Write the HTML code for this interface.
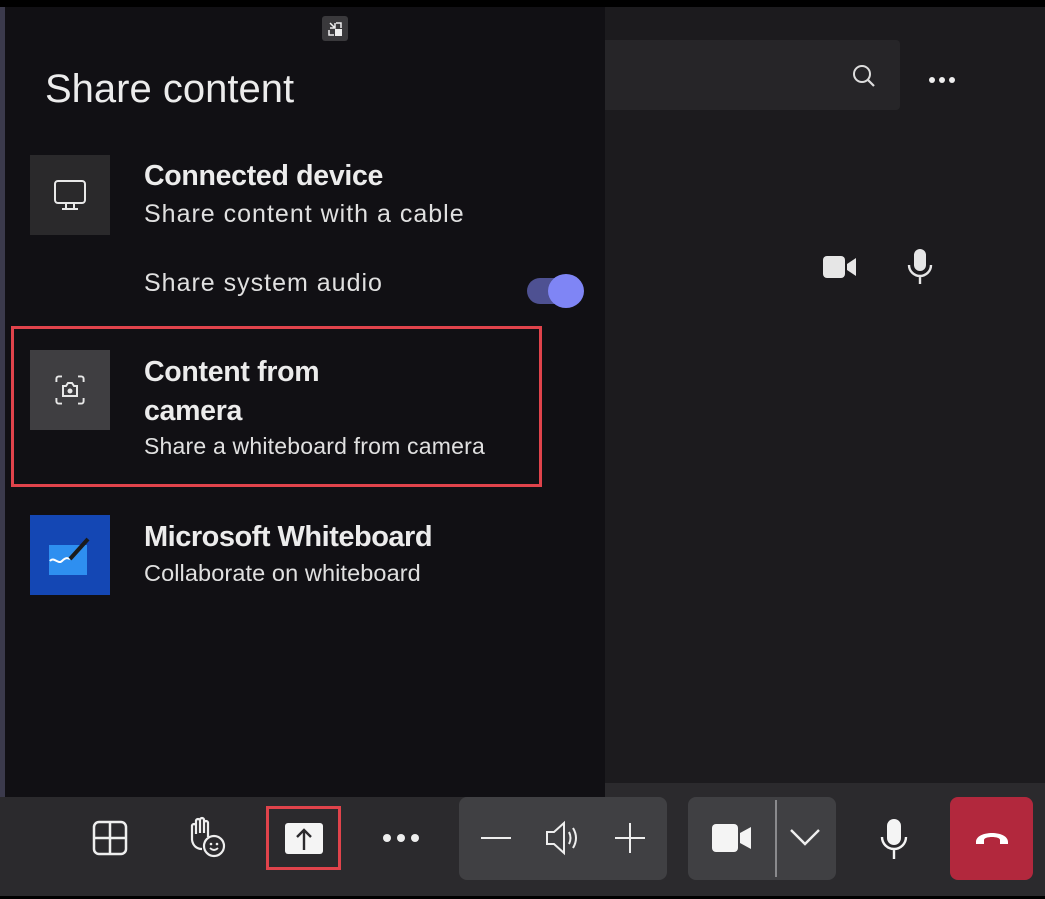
<!DOCTYPE html>
<html><head><meta charset="utf-8"><style>
*{margin:0;padding:0;box-sizing:border-box}
body{width:1045px;height:899px;background:#000;position:relative;overflow:hidden;font-family:"Liberation Sans",sans-serif;color:#e8e8e8}
.a{position:absolute;white-space:nowrap}
.t{font-weight:bold;font-size:28.5px;color:#ececec;letter-spacing:-0.3px}
.s{font-size:25px;color:#e0e0e0;letter-spacing:1px}
.ic{background:#2a292b;width:80px;height:80px}
</style></head><body>
<div class="a" style="left:0;top:7px;width:1045px;height:776px;background:#1c1b1e"></div>
<div class="a" style="left:0;top:7px;width:5px;height:790px;background:#3b3a4c"></div>
<div class="a" style="left:600px;top:40px;width:300px;height:70px;background:#262528;border-radius:4px"></div>
<svg class="a" style="left:850px;top:62px" width="28" height="28" viewBox="0 0 28 28"><circle cx="12" cy="12" r="8" fill="none" stroke="#ddd" stroke-width="2"/><path d="M18 18l6 6" stroke="#ddd" stroke-width="2.2"/></svg>
<div class="a" style="left:928px;top:71px"><svg width="28" height="8"><circle cx="4" cy="4" r="3" fill="#eee"/><circle cx="14" cy="4" r="3" fill="#eee"/><circle cx="24" cy="4" r="3" fill="#eee"/></svg></div>
<svg class="a" style="left:822px;top:252px" width="36" height="30" viewBox="0 0 36 30"><rect x="1" y="4" width="22" height="22" rx="4" fill="#e6e6e6"/><path d="M25 12l9-6v18l-9-6z" fill="#e6e6e6"/></svg>
<svg class="a" style="left:906px;top:248px" width="28" height="38" viewBox="0 0 28 38"><rect x="8" y="1" width="12" height="22" rx="6" fill="#e6e6e6"/><path d="M3 17a11 11 0 0 0 22 0M14 28v8" fill="none" stroke="#e6e6e6" stroke-width="2.4"/></svg>

<div class="a" style="left:5px;top:7px;width:600px;height:790px;background:#111014"></div>
<div class="a" style="left:322px;top:16px;width:26px;height:25px;background:#3a393c;border-radius:3px"></div>
<svg class="a" style="left:326px;top:20px" width="18" height="18" viewBox="0 0 18 18"><path d="M3 3l5 5M3 8h5V3" fill="none" stroke="#eee" stroke-width="1.5" transform="translate(1,0)"/><path d="M10 3h5v5M3 10v5h5" fill="none" stroke="#eee" stroke-width="1.5"/><rect x="9" y="9" width="7" height="7" fill="#eee"/></svg>
<div class="a" style="left:45px;top:67px;font-size:40px;color:#ececec">Share content</div>

<div class="a ic" style="left:30px;top:155px"></div>
<svg class="a" style="left:52px;top:178px" width="36" height="36" viewBox="0 0 36 36"><rect x="3" y="3" width="30" height="22" rx="3" fill="none" stroke="#e8e8e8" stroke-width="2"/><path d="M14 25v6M22 25v6M10 31h16" stroke="#e8e8e8" stroke-width="2"/></svg>
<div class="a t" style="left:144px;top:160px">Connected device</div>
<div class="a s" style="left:144px;top:200px">Share content with a cable</div>
<div class="a s" style="left:144px;top:269px">Share system audio</div>
<div class="a" style="left:527px;top:278px;width:50px;height:26px;border-radius:13px;background:#4e5192"></div>
<div class="a" style="left:548px;top:274px;width:36px;height:34px;border-radius:50%;background:#7f85f5"></div>

<div class="a" style="left:11px;top:326px;width:531px;height:161px;border:3px solid #e0434b"></div>
<div class="a ic" style="left:30px;top:350px;background:#3f3e41"></div>
<svg class="a" style="left:50px;top:370px" width="40" height="40" viewBox="0 0 40 40"><path d="M3 10V6a3 3 0 0 1 3-3h4M30 3h4a3 3 0 0 1 3 3v4M37 30v4a3 3 0 0 1-3 3h-4M10 37H6a3 3 0 0 1-3-3v-4" fill="none" stroke="#e8e8e8" stroke-width="2.4" transform="translate(4,4) scale(0.8)"/><path d="M13 16h3l2-3h4l2 3h3v10H13z" fill="none" stroke="#e8e8e8" stroke-width="2"/><circle cx="20" cy="21" r="2.5" fill="#e8e8e8"/></svg>
<div class="a t" style="left:144px;top:356px">Content from</div>
<div class="a t" style="left:144px;top:395px">camera</div>
<div class="a s" style="left:144px;top:433px;font-size:23px;letter-spacing:0.2px">Share a whiteboard from camera</div>

<div class="a ic" style="left:30px;top:515px;width:80px;height:80px;background:#1447b4"></div>
<svg class="a" style="left:30px;top:515px" width="80" height="80" viewBox="0 0 80 80"><rect x="19" y="30" width="38" height="30" fill="#2e8ff0"/><path d="M20 46c4-5 8 4 12 0s6-3 8-2" fill="none" stroke="#fff" stroke-width="2"/><path d="M40 44l18-20" stroke="#1b1b1b" stroke-width="4"/></svg>
<div class="a t" style="left:144px;top:521px;font-size:29px;letter-spacing:-0.5px">Microsoft Whiteboard</div>
<div class="a s" style="left:144px;top:560px;font-size:23.5px;letter-spacing:0.1px">Collaborate on whiteboard</div>

<div class="a" style="left:0;top:797px;width:1045px;height:99px;background:#2b2a2d"></div>
<div class="a" style="left:605px;top:783px;width:440px;height:14px;background:#2b2a2d"></div>
<svg class="a" style="left:92px;top:820px" width="36" height="36" viewBox="0 0 36 36"><rect x="2" y="2" width="32" height="32" rx="5" fill="none" stroke="#eee" stroke-width="2.5"/><path d="M18 2v32M2 18h32" stroke="#eee" stroke-width="2.5"/></svg>
<svg class="a" style="left:186px;top:816px" width="44" height="44" viewBox="0 0 44 44"><path d="M6 24V10a2 2 0 0 1 4 0v8V5a2 2 0 0 1 4 0v12V4a2 2 0 0 1 4 0v13V7a2 2 0 0 1 4 0v14" fill="none" stroke="#eee" stroke-width="2.2"/><path d="M6 24c1 6 5 9 10 9" fill="none" stroke="#eee" stroke-width="2.2"/><circle cx="28" cy="30" r="10" fill="#2b2a2d" stroke="#eee" stroke-width="2.2"/><circle cx="25" cy="28" r="1.3" fill="#eee"/><circle cx="31" cy="28" r="1.3" fill="#eee"/><path d="M24 32q4 4 8 0" fill="none" stroke="#eee" stroke-width="1.8"/></svg>
<div class="a" style="left:266px;top:806px;width:75px;height:64px;border:3px solid #e0434b"></div>
<div class="a" style="left:285px;top:823px;width:38px;height:31px;background:#f4f4f4;border-radius:3px"></div>
<svg class="a" style="left:294px;top:826px" width="20" height="26" viewBox="0 0 20 26"><path d="M10 24V4M3 11l7-7 7 7" fill="none" stroke="#2b2a2d" stroke-width="2.4"/></svg>
<svg class="a" style="left:382px;top:832px" width="38" height="12"><circle cx="5" cy="6" r="4" fill="#eee"/><circle cx="19" cy="6" r="4" fill="#eee"/><circle cx="33" cy="6" r="4" fill="#eee"/></svg>
<div class="a" style="left:459px;top:797px;width:208px;height:83px;background:#404043;border-radius:8px"></div>
<div class="a" style="left:481px;top:837px;width:30px;height:2px;background:#eee"></div>
<svg class="a" style="left:544px;top:818px" width="38" height="40" viewBox="0 0 38 40"><path d="M3 14h7l10-9v30l-10-9H3z" fill="none" stroke="#eee" stroke-width="2"/><path d="M25 14q3 6 0 12M29 10q6 10 0 20" fill="none" stroke="#eee" stroke-width="2"/></svg>
<div class="a" style="left:615px;top:837px;width:30px;height:2px;background:#eee"></div>
<div class="a" style="left:629px;top:823px;width:2px;height:30px;background:#eee"></div>
<div class="a" style="left:688px;top:797px;width:148px;height:83px;background:#404043;border-radius:8px"></div>
<div class="a" style="left:775px;top:800px;width:2px;height:77px;background:#8a8a8d"></div>
<svg class="a" style="left:710px;top:822px" width="44" height="32" viewBox="0 0 44 32"><rect x="2" y="2" width="26" height="28" rx="4" fill="#f4f4f4"/><path d="M30 11l11-6v22l-11-6z" fill="#f4f4f4"/></svg>
<svg class="a" style="left:788px;top:826px" width="34" height="22"><path d="M3 4l14 14 14-14" fill="none" stroke="#eee" stroke-width="2.4"/></svg>
<svg class="a" style="left:878px;top:817px" width="32" height="44" viewBox="0 0 32 44"><rect x="9" y="2" width="14" height="26" rx="7" fill="#f4f4f4"/><path d="M4 20a12 12 0 0 0 24 0M16 32v10" fill="none" stroke="#f4f4f4" stroke-width="2.4"/></svg>
<div class="a" style="left:950px;top:797px;width:83px;height:83px;background:#b2283d;border-radius:8px"></div>
<svg class="a" style="left:972px;top:826px" width="40" height="22" viewBox="0 0 40 22"><path d="M4 16c0-12 32-12 32 0v2h-8v-4c0-4-16-4-16 0v4H4z" fill="#fff"/></svg>
</body></html>
